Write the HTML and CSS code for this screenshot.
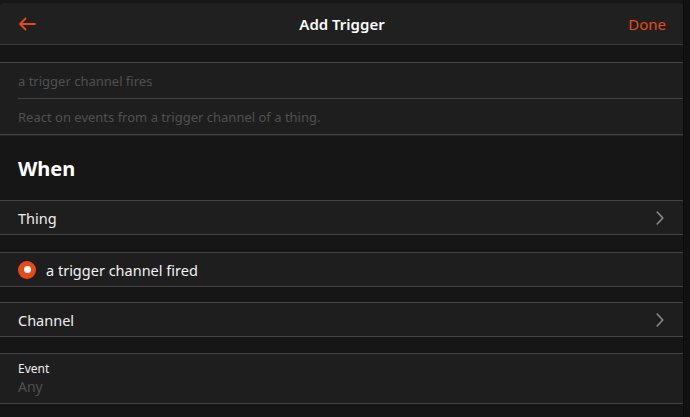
FILE: index.html
```html
<!DOCTYPE html>
<html lang="en">
<head>
    <meta charset="UTF-8">
    <meta name="viewport" content="width=device-width, initial-scale=1.0">
    <title>Add Trigger</title>
    <link rel="stylesheet" href="styles.css">
</head>
<body>
    <div class="page">
        <div class="panel">
            <div class="navbar">
                <a class="nav-back" href="#">
                    <svg width="18" height="14" viewBox="0 0 18 14">
                        <path d="M17 7H2M7.5 1.5L2 7l5.5 5.5" fill="none" stroke="#e64a19" stroke-width="1.8" stroke-linecap="round" stroke-linejoin="round"/>
                    </svg>
                </a>
                <div class="nav-title">Add Trigger</div>
                <a class="nav-done" href="#">Done</a>
            </div>

            <div class="list intro">
                <div class="item dim">a trigger channel fires</div>
                <div class="item dim inset">React on events from a trigger channel of a thing.</div>
            </div>

            <div class="block-title">When</div>

            <div class="list">
                <div class="item link">
                    <span>Thing</span>
                    <svg class="chevron" width="8" height="14" viewBox="0 0 8 14">
                        <path d="M1.2 1l5.6 6-5.6 6" fill="none" stroke="#8a8a8a" stroke-width="1.6" stroke-linecap="round" stroke-linejoin="round"/>
                    </svg>
                </div>
            </div>

            <div class="list gap-17">
                <div class="item radio-item">
                    <span class="radio"></span>
                    <span>a trigger channel fired</span>
                </div>
            </div>

            <div class="list gap-15">
                <div class="item link">
                    <span>Channel</span>
                    <svg class="chevron" width="8" height="14" viewBox="0 0 8 14">
                        <path d="M1.2 1l5.6 6-5.6 6" fill="none" stroke="#8a8a8a" stroke-width="1.6" stroke-linecap="round" stroke-linejoin="round"/>
                    </svg>
                </div>
            </div>

            <div class="list gap-16">
                <div class="item field">
                    <div class="field-label">Event</div>
                    <div class="field-value">Any</div>
                </div>
            </div>
        </div>
        <div class="side"></div>
    </div>
</body>
</html>
```

FILE: styles.css
```css
body {
    margin: 0;
    background: #121212;
    font-family: "Noto Sans", "Open Sans", Arial, sans-serif;
    color: #f2f2f2;
}
.page {
    display: flex;
    height: 417px;
    overflow: hidden;
}
.panel {
    width: 683px;
    background: #161616;
    padding-top: 3px;
}
.side {
    flex: 1;
    background: #111;
    border-left: 1px solid #0c0c0c;
}
.navbar {
    height: 41px;
    background: #202020;
    border-bottom: 1px solid #3a3a3a;
    border-radius: 4px 4px 0 0;
    display: flex;
    align-items: center;
    justify-content: space-between;
    padding: 0 17px 0 18px;
}
.nav-back {
    display: flex;
    align-items: center;
    width: 60px;
}
.nav-title {
    font-size: 15px;
    font-weight: 600;
    color: #fff;
}
.nav-done {
    width: 60px;
    text-align: right;
    color: #e64a19;
    font-size: 15px;
    text-decoration: none;
}
.list {
    background: #1e1e1e;
    border-top: 1px solid #434343;
    border-bottom: 1px solid #434343;
}
.list.intro {
    margin-top: 17px;
}
.list.gap-17 {
    margin-top: 17px;
}
.list.gap-15 {
    margin-top: 15px;
}
.list.gap-16 {
    margin-top: 16px;
}
.item {
    height: 33px;
    padding: 0 18px;
    display: flex;
    align-items: center;
    font-size: 14.5px;
}
.item.dim {
    height: 35px;
    color: #505050;
    font-size: 13px;
    position: relative;
}
.item.inset {
    height: 35px;
    padding-top: 1px;
}
.item.inset::before {
    content: "";
    position: absolute;
    left: 18px;
    right: 0;
    top: 0;
    border-top: 1px solid #434343;
}
.block-title {
    height: 65px;
    padding: 0 18px;
    display: flex;
    align-items: center;
    font-size: 20px;
    font-weight: 700;
    color: #fff;
    border-top: 1px solid #232323;
    box-sizing: border-box;
}
.link {
    justify-content: space-between;
    color: #eee;
}
.chevron {
    margin-right: 1px;
}
.radio-item {
    gap: 10px;
}
.radio {
    width: 18px;
    height: 18px;
    border-radius: 50%;
    background: #e64a19;
    position: relative;
}
.radio::after {
    content: "";
    position: absolute;
    left: 5.5px;
    top: 5.5px;
    width: 7px;
    height: 7px;
    border-radius: 50%;
    background: #fff;
}
.field {
    height: 49px;
    flex-direction: column;
    align-items: flex-start;
    justify-content: center;
}
.field-label {
    font-size: 12px;
    color: #eee;
    line-height: 17px;
}
.field-value {
    font-size: 14px;
    color: #505050;
    line-height: 20px;
}
```
